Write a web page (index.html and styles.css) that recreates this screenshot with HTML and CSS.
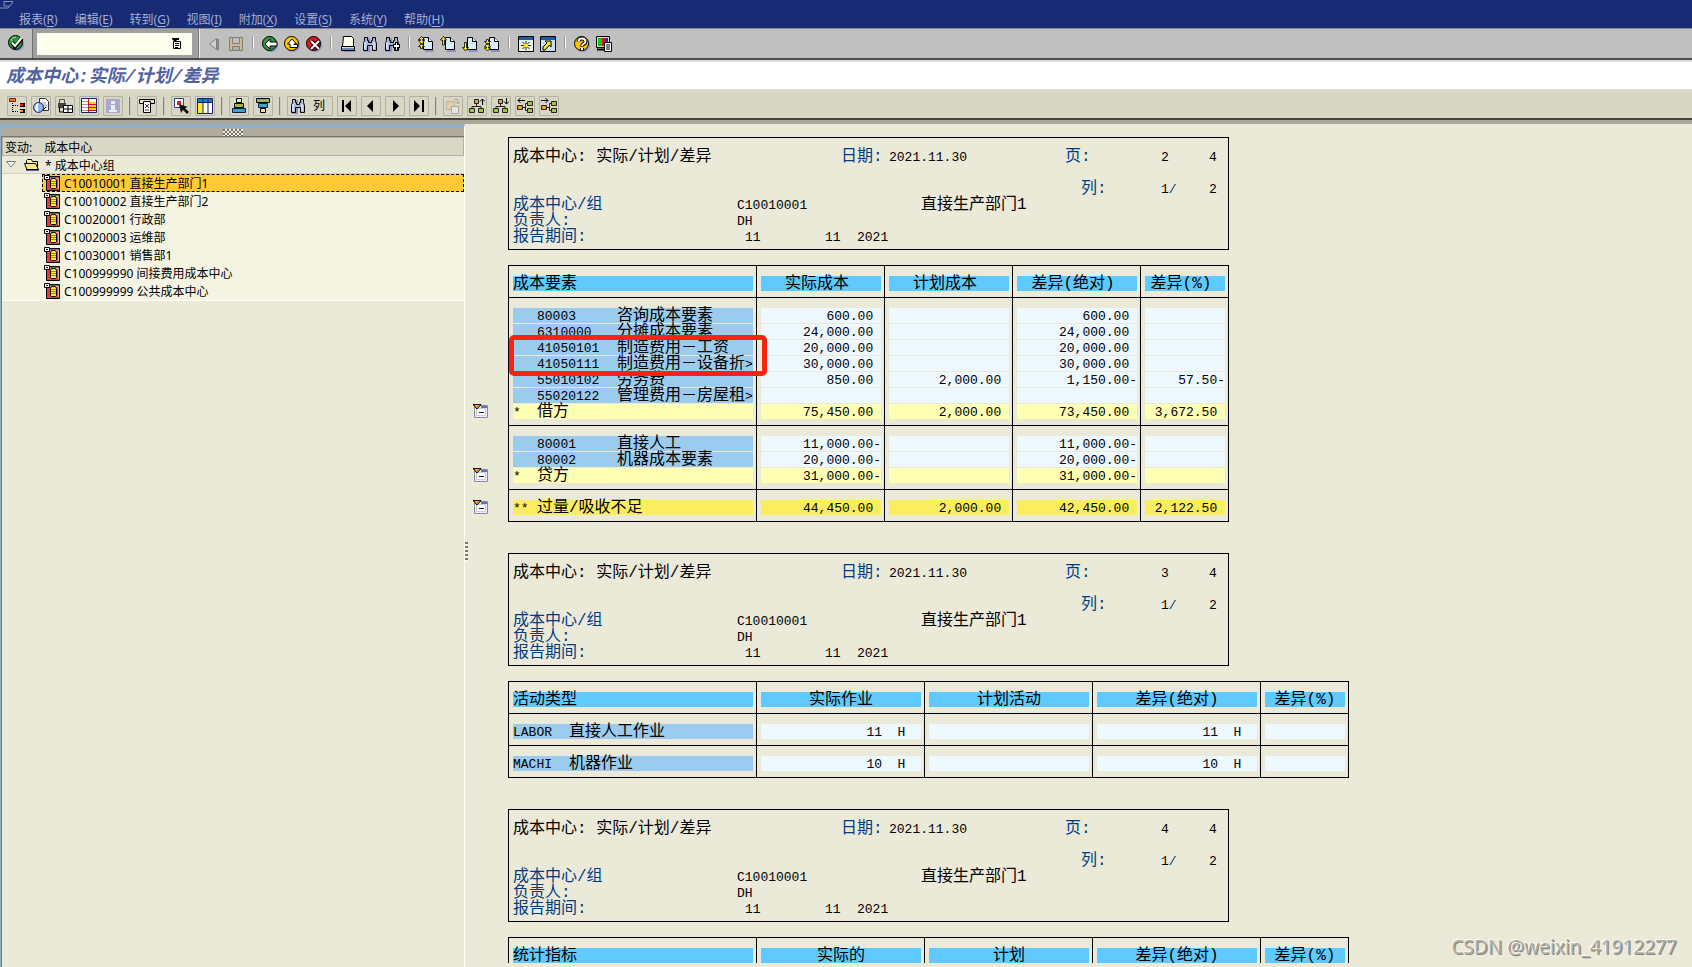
FILE: index.html
```html
<!DOCTYPE html>
<html lang="zh-CN">
<head>
<meta charset="utf-8">
<title>成本中心: 实际/计划/差异</title>
<link rel="stylesheet" href="styles.css">
</head>
<body>
<svg class="sprite" width="0" height="0" aria-hidden="true">
  <symbol id="check" viewBox="0 0 16 16"><circle cx="9" cy="9" r="7" fill="#8f8fc4"/><circle cx="7.5" cy="7.5" r="7" fill="#2c9a3a" stroke="#000"/><path d="M3 6a5 5 0 0 1 5-4" stroke="#9be29b" fill="none"/><path d="M4 7.500l3 4 7-8" stroke="#000" stroke-width="4" fill="none"/><path d="M4 7.500l3 3.500 6.500-8" stroke="#fff" stroke-width="2" fill="none"/></symbol>
  <symbol id="prev" viewBox="0 0 16 16"><path d="M11 2.500v12l2-.5v-11z" fill="#888"/><path d="M10.500 2.500v11l-7-5.500z" fill="#d0d0d0" stroke="#808080"/></symbol>
  <symbol id="save" viewBox="0 0 16 16"><path d="M1.500 1.500h13v13h-13z" fill="#c9b795" stroke="#85806f"/><path d="M4.500 1.500h7v6h-7z" fill="#c0c0c0" stroke="#85806f"/><path d="M4.500 10.500h7v4h-7z" fill="#aaa" stroke="#85806f"/></symbol>
  <symbol id="back" viewBox="0 0 16 16"><circle cx="9" cy="9" r="7" fill="#8f8fc4"/><circle cx="7.500" cy="7.500" r="7" fill="#2c9a3a" stroke="#000"/><path d="M3 8l5-5v3h7v4H8v3z" fill="#fff" stroke="#000"/></symbol>
  <symbol id="exit" viewBox="0 0 16 16"><circle cx="9" cy="9" r="7" fill="#8f8fc4"/><circle cx="7.500" cy="7.500" r="7" fill="#ffc800" stroke="#000"/><path d="M8 3L3.500 8H6v3.500h7.500v-3H10V8h2.500z" fill="#fff" stroke="#000"/></symbol>
  <symbol id="cancel" viewBox="0 0 16 16"><circle cx="9" cy="9" r="7" fill="#8f8fc4"/><circle cx="7.500" cy="7.500" r="7" fill="#e01420" stroke="#000"/><path d="M5 5l8 8M13 5l-8 8" stroke="#000" stroke-width="4"/><path d="M5 5l8 8M13 5l-8 8" stroke="#fff" stroke-width="2"/></symbol>
  <symbol id="print" viewBox="0 0 16 16"><path d="M3 14h13v2H3z" fill="#8f8fc4"/><path d="M3.500.5h8l2 2v8h-11z" fill="#fffff0" stroke="#000"/><path d="M1.500 10.500h13v4h-13z" fill="#c6dcef" stroke="#000"/><path d="M2 13h12" stroke="#17307a"/></symbol>
  <symbol id="find" viewBox="0 0 16 16"><path d="M3 2h5v14H2z" fill="#8f8fc4"/><path d="M2.500 1.500h3v3h1v2h3v-2h1v-3h3v3l1 3v7h-4v-5h-5v5h-4v-7l1-3z" fill="#a9b9dc" stroke="#000"/><path d="M3 6v7M12 6v7" stroke="#fff"/></symbol>
  <symbol id="findnext" viewBox="0 0 16 16"><use href="#find"/><path d="M9 8h2V6h3v2h2v4h-2v3h-3v-3H9z" fill="#000"/><path d="M12 7h1v2h2v2h-2v3h-1v-3h-2V9h2z" fill="#fff"/></symbol>
  <symbol id="page" viewBox="0 0 16 16"><path d="M7 14h9V5h1v11H7z" fill="#8f8fc4"/><path d="M5.500 1.500h5l4 4v8h-9z" fill="#d9ecf8" stroke="#000"/><path d="M10.500 1.500v4h4" fill="#fff" stroke="#000"/></symbol>
  <symbol id="firstpage" viewBox="0 0 16 16"><use href="#page"/><path d="M3.500.5l3 3h-2v1h2l-3 4-3-4h2v-1h-2zM3.500 7.500l3 3h-2v2h-2v-2h-2z" fill="#ffe818" stroke="#000" stroke-width=".8"/></symbol>
  <symbol id="pageup" viewBox="0 0 16 16"><use href="#page"/><path d="M3.500.5l3 3.500h-2v5h-2V4h-2z" fill="#ffe818" stroke="#000" stroke-width=".8"/></symbol>
  <symbol id="pagedown" viewBox="0 0 16 16"><use href="#page"/><path d="M3.500 15l3-3.500h-2v-5h-2v5h-2z" fill="#ffe818" stroke="#000" stroke-width=".8"/></symbol>
  <symbol id="lastpage" viewBox="0 0 16 16"><use href="#page"/><path d="M3.500 15l3-3h-2v-1h2l-3-4-3 4h2v1h-2zM2.500 3.500h2v2h2l-3 3-3-3h2z" fill="#ffe818" stroke="#000" stroke-width=".8"/></symbol>
  <symbol id="session" viewBox="0 0 16 16"><path d="M.5.500h15v15H.5z" fill="#e8f0e0" stroke="#000"/><path d="M1 1h14v3H1z" fill="#1460b0"/><path d="M8 5v9M3 9.500h10M4.500 6l7 7M11.500 6l-7 7" stroke="#222"/><path d="M6 8h4v3H6z" fill="#fff000"/></symbol>
  <symbol id="shortcut" viewBox="0 0 16 16"><path d="M.5.500h15v15H.5z" fill="#c6dcef" stroke="#000"/><path d="M1 1h14v3H1z" fill="#1460b0"/><path d="M3 14v-3l4-4-2-2h6v6L9.500 9 5 14z" fill="#ffe818" stroke="#000"/></symbol>
  <symbol id="help" viewBox="0 0 16 16"><circle cx="9" cy="9" r="7" fill="#8f8fc4"/><circle cx="7.500" cy="7.500" r="7" fill="#ffc400" stroke="#000"/><path d="M4.500 5.500c0-4 7-4 7 0 0 2.500-3.500 2-3.500 5M8 12v2" stroke="#000" stroke-width="4" fill="none"/><path d="M4.500 5.500c0-4 7-4 7 0 0 2.500-3.500 2-3.500 4.500M8 12v2" stroke="#fff" stroke-width="2" fill="none"/></symbol>
  <symbol id="layout" viewBox="0 0 16 16"><path d="M.5.500h13v11H.5z" fill="#ddd" stroke="#000"/><path d="M2 2h4v8H2z" fill="#0c0"/><path d="M6 2h3v8H6z" fill="#f00"/><path d="M9 2h3v8H9z" fill="#22f"/><path d="M1 13.500h8" stroke="#000" stroke-width="2"/><path d="M8.500 6.500h7v9h-7z" fill="#fff" stroke="#000"/><path d="M10 9h4M10 11h4M10 13h4" stroke="#000"/></symbol>
  <symbol id="tree" viewBox="0 0 16 16"><path d="M3.500 5v9M4 7.500h6M4 13.500h6" stroke="#000" stroke-dasharray="1 1" fill="none"/><path d="M.500.500h6v3h-6z" fill="#f07818" stroke="#7a2010"/><path d="M11 5h5v4h-5zM11 11h5v4h-5z" fill="#000"/><path d="M11 6h3v2h-3z" fill="#e62020"/><path d="M11 12h3v2h-3z" fill="#f59b20"/></symbol>
  <symbol id="docview" viewBox="0 0 16 16"><path d="M6.500.500h6l3 3v9h-9z" fill="#fff" stroke="#333"/><path d="M8 5h5M9 7h5M9 9h5" stroke="#999"/><circle cx="5.500" cy="9.500" r="5" fill="#8db6e8" stroke="#1a2a70"/><path d="M5 5v9a5 5 0 0 1 0-9" fill="#fff"/><path d="M10 12l3-3" stroke="#000"/></symbol>
  <symbol id="lockgrid" viewBox="0 0 16 16"><path d="M2.500 5V1.500h5V5" fill="none" stroke="#555"/><path d="M1 5h8v5H1z" fill="#444"/><path d="M6.500 7.500h9v7h-9z" fill="#fff" stroke="#000"/><path d="M7 11h8M11 8v6" stroke="#000"/><path d="M2.500 9v5h4" stroke="#000" fill="none"/></symbol>
  <symbol id="lines" viewBox="0 0 16 16"><path d="M.5.500h15v14H.5z" fill="#fff" stroke="#17206c"/><path d="M1 3.500h7M1 6.500h7M1 9.500h7M1 12.500h7" stroke="#99a"/><path d="M8 4h7v2H8zM8 7h7v2H8zM8 10h7v2H8z" fill="#ffd11f"/><path d="M8 6.500h7M8 9.500h7M8 12.500h7M7.500 1v13" stroke="#c11"/></symbol>
  <symbol id="info" viewBox="0 0 16 16"><path d="M1 1h14v14H1z" fill="#aaa9ca"/><path d="M6 3h4v3H6zM5 7h5v5h2v2H4v-2h2V8H5z" fill="#eceaf4"/></symbol>
  <symbol id="filter" viewBox="0 0 16 16"><path d="M.5 1.500h15v4H.5z" fill="#e8dfc4" stroke="#000"/><path d="M4.500 3.500h7v11h-7z" fill="#fff" stroke="#000"/><path d="M6 6l4 4M10 6l-4 4M6 12h4" stroke="#333"/></symbol>
  <symbol id="select" viewBox="0 0 16 16"><path d="M1.500.500h9v9h-9z" fill="#fff" stroke="#34407c"/><path d="M4 3h4v4H4z" fill="#e41e1e"/><path d="M6 6l9 3-3 1 4 4-2 2-4-4-2 3z" fill="#111"/></symbol>
  <symbol id="columns" viewBox="0 0 16 16"><path d="M.5.500h15v15H.5z" fill="#fff" stroke="#17206c"/><path d="M1 1h14v3H1z" fill="#1680c0"/><path d="M1 5h5v10H1z" fill="#ffe430"/><path d="M6 1v14M11 1v14M1 4.500h14" stroke="#17206c"/></symbol>
  <symbol id="sortup" viewBox="0 0 16 16"><path d="M5.500.500h5v4h-5z" fill="#eee890" stroke="#000"/><path d="M3.500 5.500h9v4h-9z" fill="#9fb843" stroke="#000"/><path d="M1.500 10.500h13v4h-13z" fill="#3fa0d0" stroke="#0b2040"/></symbol>
  <symbol id="sortdown" viewBox="0 0 16 16"><path d="M5.500 10.500h5v4h-5z" fill="#eee890" stroke="#000"/><path d="M3.500 5.500h9v4h-9z" fill="#3fa0d0" stroke="#0b2040"/><path d="M1.500.500h13v4h-13z" fill="#9fb843" stroke="#000"/></symbol>
  <symbol id="first" viewBox="0 0 16 16"><path d="M3 2h2v12H3zM12 2v12L6 8z"/></symbol>
  <symbol id="left" viewBox="0 0 16 16"><path d="M10 2v12L4 8z"/></symbol>
  <symbol id="right" viewBox="0 0 16 16"><path d="M6 2v12l6-6z"/></symbol>
  <symbol id="last" viewBox="0 0 16 16"><path d="M3 2v12l6-6zM11 2h2v12h-2z"/></symbol>
  <symbol id="copy" viewBox="0 0 16 16"><path d="M1.500 3.500h8v8h-8z" fill="#e6cda6" stroke="#bbb7a8"/><path d="M6.500 8.500h7v7h-7z" fill="#e3e6e4" stroke="#aba99d"/><path d="M9 1.500h4V6m-2-2l2 2 2-2" fill="none" stroke="#a9a79b"/></symbol>
  <symbol id="orgbase" viewBox="0 0 16 16"><path d="M7.500 6v3M3 11V8.500h9V11" fill="none" stroke="#222"/><path d="M5.500 1.500h4v4h-4z" fill="#f49a20" stroke="#222"/><path d="M.5 10.500h5v4h-5zM9.500 10.500h5v4h-5z" fill="#a5c540" stroke="#222"/></symbol>
  <symbol id="orgup" viewBox="0 0 16 16"><use href="#orgbase"/><path d="M13.500 7V1M11 3.500L13.500 1 16 3.500" fill="none" stroke="#000"/></symbol>
  <symbol id="orgdown" viewBox="0 0 16 16"><use href="#orgbase"/><path d="M13.500 0v6M11 3.500L13.500 6 16 3.500" fill="none" stroke="#000"/></symbol>
  <symbol id="orgside" viewBox="0 0 16 16"><path d="M6 9.500h2m2-4H8.500v7h2" fill="none" stroke="#222"/><path d="M.5 7.500h5v4h-5z" fill="#f49a20" stroke="#222"/><path d="M10.500 3.500h5v4h-5zM10.500 10.500h5v4h-5z" fill="#a5c540" stroke="#222"/></symbol>
  <symbol id="orgleft" viewBox="0 0 16 16"><use href="#orgside"/><path d="M8 2.500H1M3.500 0L1 2.500 3.500 5" fill="none" stroke="#000"/></symbol>
  <symbol id="orgright" viewBox="0 0 16 16"><use href="#orgside"/><path d="M0 2.500h7M4.500 0L7 2.500 4.500 5" fill="none" stroke="#000"/></symbol>
  <symbol id="folder" viewBox="0 0 16 16"><path d="M2 13h13v1H2z" fill="#4965a5"/><path d="M2.500 12.500v-9l1-1h4l1 2h5v8z" fill="#fff3a8" stroke="#000"/><path d="M3 12.500L.5 6.500h11l3 6z" fill="#ffe68a" stroke="#000"/></symbol>
  <symbol id="centre" viewBox="0 0 16 16"><path d="M2.500 1.500h13v14h-13z" fill="#e83a3a" stroke="#000"/><path d="M5 3.500h9.500V14" stroke="#ffb0a0" fill="none"/><path d="M6.500 5.500l1-2h4l1 2v7l-1 1h-4l-1-1z" fill="#ffee20" stroke="#000"/><path d="M7 6.500h5M7 8.500h5M7 10.500h5" stroke="#a08c00"/><path d="M.5.500h5v4h-5z" fill="#fff" stroke="#000"/><path d="M2 2.500h2" stroke="#000"/></symbol>
  <symbol id="collapse" viewBox="0 0 16 15"><path d="M1.500 1.500h13v12h-13z" fill="#e9eefb" stroke="#8b8c90"/><path d="M8 2h6v2H8z" fill="#4b7bb8"/><path d="M3.500 4.500h9v7h-9z" fill="#fff" stroke="#c3cbe8"/><path d="M6 8.500h5" stroke="#0a1590"/><path d="M0 .500h8L4 5z" fill="#f79a1c" stroke="#000"/></symbol>
</svg>

<header class="menubar">
  <svg class="window-mark" viewBox="0 0 14 9" width="14" height="9"><path d="M4 1.500h9M13 2l-3 4M4 1v5h5M0 8h8l2-2" fill="none" stroke="#8291b8"/></svg>
  <nav class="menu">
    <a href="#">报表(<u>R</u>)</a><a href="#">编辑(<u>E</u>)</a><a href="#">转到(<u>G</u>)</a><a href="#">视图(<u>I</u>)</a><a href="#">附加(<u>X</u>)</a><a href="#">设置(<u>S</u>)</a><a href="#">系统(<u>Y</u>)</a><a href="#">帮助(<u>H</u>)</a>
  </nav>
</header>

<div class="system-bar">
  <div class="confirm"><button class="plain" aria-label="确认"><svg><use href="#check"/></svg></button></div>
  <div class="command">
    <input type="text" aria-label="命令">
    <button class="plain history" aria-label="历史"><svg viewBox="0 0 10 11"><path d="M0 0h7v2H5L3 4 0 1z"/><path d="M1.500 3.500h7v7h-7z" fill="#fff" stroke="#000"/><path d="M3 5.500h4M3 7.500h4M3 9.500h3" stroke="#000"/></svg></button>
  </div>
  <div class="system-tools">
    <button class="plain" aria-label="上一个"><svg><use href="#prev"/></svg></button>
    <button class="plain" aria-label="保存"><svg><use href="#save"/></svg></button>
    <i class="rule"></i>
    <button class="plain" aria-label="返回"><svg><use href="#back"/></svg></button>
    <button class="plain" aria-label="退出"><svg><use href="#exit"/></svg></button>
    <button class="plain" aria-label="取消"><svg><use href="#cancel"/></svg></button>
    <i class="rule"></i>
    <button class="plain" aria-label="打印"><svg><use href="#print"/></svg></button>
    <button class="plain" aria-label="查找"><svg><use href="#find"/></svg></button>
    <button class="plain" aria-label="查找下一个"><svg><use href="#findnext"/></svg></button>
    <i class="rule"></i>
    <button class="plain" aria-label="第一页"><svg><use href="#firstpage"/></svg></button>
    <button class="plain" aria-label="上一页"><svg><use href="#pageup"/></svg></button>
    <button class="plain" aria-label="下一页"><svg><use href="#pagedown"/></svg></button>
    <button class="plain" aria-label="最后一页"><svg><use href="#lastpage"/></svg></button>
    <i class="rule"></i>
    <button class="plain" aria-label="新建会话"><svg><use href="#session"/></svg></button>
    <button class="plain" aria-label="快捷方式"><svg><use href="#shortcut"/></svg></button>
    <i class="rule"></i>
    <button class="plain" aria-label="帮助"><svg><use href="#help"/></svg></button>
    <button class="plain" aria-label="布局"><svg><use href="#layout"/></svg></button>
  </div>
</div>

<h1 class="title">成本中心:实际/计划/差异</h1>

<div class="app-bar">
  <button class="tool" aria-label="层次"><svg><use href="#tree"/></svg></button>
  <button class="tool" aria-label="凭证"><svg><use href="#docview"/></svg></button>
  <button class="tool" aria-label="锁定"><svg><use href="#lockgrid"/></svg></button>
  <button class="tool" aria-label="行项目"><svg><use href="#lines"/></svg></button>
  <button class="tool" aria-label="信息"><svg><use href="#info"/></svg></button>
  <i class="divider"></i>
  <button class="tool" aria-label="筛选"><svg><use href="#filter"/></svg></button>
  <i class="divider"></i>
  <button class="tool" aria-label="选择"><svg><use href="#select"/></svg></button>
  <button class="tool" aria-label="栏目"><svg><use href="#columns"/></svg></button>
  <i class="divider"></i>
  <button class="tool" aria-label="升序"><svg><use href="#sortup"/></svg></button>
  <button class="tool" aria-label="降序"><svg><use href="#sortdown"/></svg></button>
  <i class="divider"></i>
  <button class="tool wide"><svg><use href="#find"/></svg>列</button>
  <button class="tool" aria-label="首列"><svg><use href="#first"/></svg></button>
  <button class="tool" aria-label="左"><svg><use href="#left"/></svg></button>
  <button class="tool" aria-label="右"><svg><use href="#right"/></svg></button>
  <button class="tool" aria-label="末列"><svg><use href="#last"/></svg></button>
  <i class="divider"></i>
  <button class="tool" aria-label="复制"><svg><use href="#copy"/></svg></button>
  <button class="tool" aria-label="上级"><svg><use href="#orgup"/></svg></button>
  <button class="tool" aria-label="下级"><svg><use href="#orgdown"/></svg></button>
  <button class="tool" aria-label="左级"><svg><use href="#orgleft"/></svg></button>
  <button class="tool" aria-label="右级"><svg><use href="#orgright"/></svg></button>
</div>

<main class="workspace">
  <aside class="navigator">
    <div class="grip"><i class="dots"></i></div>
    <div class="variation"><span>变动:</span><span>成本中心</span></div>
    <div class="tree-root">
      <svg class="twisty" viewBox="0 0 10 7"><path d="M.5.500h9L5 6z" fill="#fff" stroke="#777"/></svg>
      <svg class="icon"><use href="#folder"/></svg>
      <span>* 成本中心组</span>
    </div>
    <ul class="tree">
      <li class="selected"><svg class="icon"><use href="#centre"/></svg><span>C10010001 直接生产部门1</span></li>
      <li><svg class="icon"><use href="#centre"/></svg><span>C10010002 直接生产部门2</span></li>
      <li><svg class="icon"><use href="#centre"/></svg><span>C10020001 行政部</span></li>
      <li><svg class="icon"><use href="#centre"/></svg><span>C10020003 运维部</span></li>
      <li><svg class="icon"><use href="#centre"/></svg><span>C10030001 销售部1</span></li>
      <li><svg class="icon"><use href="#centre"/></svg><span>C100999990 间接费用成本中心</span></li>
      <li><svg class="icon"><use href="#centre"/></svg><span>C100999999 公共成本中心</span></li>
    </ul>
  </aside>
  <div class="splitter"><i class="dots-vertical"></i></div>

  <div class="report">
    <section class="page">
      <div class="page-head">
        <div class="line"><span class="c1">成本中心: 实际/计划/差异</span><span class="c42 label">日期:</span><span class="c48 num">2021.11.30</span><span class="c70 label">页:</span><span class="c82 num">2</span><span class="c88 num">4</span></div>
        <div class="line"></div>
        <div class="line"><span class="c72 label">列:</span><span class="c82 num">1<span class="label">/</span></span><span class="c88 num">2</span></div>
        <div class="line"><span class="c1 label">成本中心/组</span><span class="c29 num">C10010001</span><span class="c52">直接生产部门1</span></div>
        <div class="line"><span class="c1 label">负责人:</span><span class="c29 num">DH</span></div>
        <div class="line"><span class="c1 label">报告期间:</span><span class="c30 num">11</span><span class="c40 num">11</span><span class="c44 num">2021</span></div>
      </div>
      <div class="sheet">
        <div class="gutter">
          <button class="plain" aria-label="折叠借方"><svg><use href="#collapse"/></svg></button>
          <button class="plain" aria-label="折叠贷方"><svg><use href="#collapse"/></svg></button>
          <button class="plain" aria-label="折叠合计"><svg><use href="#collapse"/></svg></button>
        </div>
        <table class="grid costs">
          <colgroup><col class="w-name"><col class="w-cost"><col class="w-cost"><col class="w-cost"><col class="w-pct"></colgroup>
          <thead><tr><th class="first">成本要素</th><th>实际成本</th><th>计划成本</th><th>差异(绝对)</th><th>差异(%)</th></tr></thead>
          <tbody>
            <tr><td><span class="code">80003</span>咨询成本要素</td><td>600.00&nbsp;</td><td></td><td>600.00&nbsp;</td><td></td></tr>
            <tr><td><span class="code">6310000</span>分摊成本要素</td><td>24,000.00&nbsp;</td><td></td><td>24,000.00&nbsp;</td><td></td></tr>
            <tr><td><span class="code">41050101</span>制造费用－工资</td><td>20,000.00&nbsp;</td><td></td><td>20,000.00&nbsp;</td><td></td></tr>
            <tr><td><span class="code">41050111</span>制造费用－设备折<span class="more">&gt;</span></td><td>30,000.00&nbsp;</td><td></td><td>30,000.00&nbsp;</td><td></td></tr>
            <tr><td><span class="code">55010102</span>劳务费</td><td>850.00&nbsp;</td><td>2,000.00&nbsp;</td><td>1,150.00-</td><td>57.50-</td></tr>
            <tr><td><span class="code">55020122</span>管理费用－房屋租<span class="more">&gt;</span></td><td></td><td></td><td></td><td></td></tr>
            <tr class="subtotal"><td><span class="mark">*</span>借方</td><td>75,450.00&nbsp;</td><td>2,000.00&nbsp;</td><td>73,450.00&nbsp;</td><td>3,672.50&nbsp;</td></tr>
          </tbody>
          <tbody>
            <tr><td><span class="code">80001</span>直接人工</td><td>11,000.00-</td><td></td><td>11,000.00-</td><td></td></tr>
            <tr><td><span class="code">80002</span>机器成本要素</td><td>20,000.00-</td><td></td><td>20,000.00-</td><td></td></tr>
            <tr class="subtotal"><td><span class="mark">*</span>贷方</td><td>31,000.00-</td><td></td><td>31,000.00-</td><td></td></tr>
          </tbody>
          <tbody>
            <tr class="total"><td><span class="mark">**</span>过量/吸收不足</td><td>44,450.00&nbsp;</td><td>2,000.00&nbsp;</td><td>42,450.00&nbsp;</td><td>2,122.50&nbsp;</td></tr>
          </tbody>
        </table>
        <div class="highlight"></div>
      </div>
    </section>

    <section class="page">
      <div class="page-head">
        <div class="line"><span class="c1">成本中心: 实际/计划/差异</span><span class="c42 label">日期:</span><span class="c48 num">2021.11.30</span><span class="c70 label">页:</span><span class="c82 num">3</span><span class="c88 num">4</span></div>
        <div class="line"></div>
        <div class="line"><span class="c72 label">列:</span><span class="c82 num">1<span class="label">/</span></span><span class="c88 num">2</span></div>
        <div class="line"><span class="c1 label">成本中心/组</span><span class="c29 num">C10010001</span><span class="c52">直接生产部门1</span></div>
        <div class="line"><span class="c1 label">负责人:</span><span class="c29 num">DH</span></div>
        <div class="line"><span class="c1 label">报告期间:</span><span class="c30 num">11</span><span class="c40 num">11</span><span class="c44 num">2021</span></div>
      </div>
      <div class="sheet">
        <div class="gutter"></div>
        <table class="grid">
          <colgroup><col class="w-name"><col class="w-qty"><col class="w-qty"><col class="w-qty"><col class="w-pct"></colgroup>
          <thead><tr><th class="first">活动类型</th><th>实际作业</th><th>计划活动</th><th>差异(绝对)</th><th>差异(%)</th></tr></thead>
          <tbody><tr><td><span class="key">LABOR</span>直接人工作业</td><td>11&nbsp;&nbsp;H&nbsp;&nbsp;</td><td></td><td>11&nbsp;&nbsp;H&nbsp;&nbsp;</td><td></td></tr></tbody>
          <tbody><tr><td><span class="key">MACHI</span>机器作业</td><td>10&nbsp;&nbsp;H&nbsp;&nbsp;</td><td></td><td>10&nbsp;&nbsp;H&nbsp;&nbsp;</td><td></td></tr></tbody>
        </table>
      </div>
    </section>

    <section class="page">
      <div class="page-head">
        <div class="line"><span class="c1">成本中心: 实际/计划/差异</span><span class="c42 label">日期:</span><span class="c48 num">2021.11.30</span><span class="c70 label">页:</span><span class="c82 num">4</span><span class="c88 num">4</span></div>
        <div class="line"></div>
        <div class="line"><span class="c72 label">列:</span><span class="c82 num">1<span class="label">/</span></span><span class="c88 num">2</span></div>
        <div class="line"><span class="c1 label">成本中心/组</span><span class="c29 num">C10010001</span><span class="c52">直接生产部门1</span></div>
        <div class="line"><span class="c1 label">负责人:</span><span class="c29 num">DH</span></div>
        <div class="line"><span class="c1 label">报告期间:</span><span class="c30 num">11</span><span class="c40 num">11</span><span class="c44 num">2021</span></div>
      </div>
      <div class="sheet">
        <div class="gutter"></div>
        <table class="grid">
          <colgroup><col class="w-name"><col class="w-qty"><col class="w-qty"><col class="w-qty"><col class="w-pct"></colgroup>
          <thead><tr><th class="first">统计指标</th><th>实际的</th><th>计划</th><th>差异(绝对)</th><th>差异(%)</th></tr></thead>
        </table>
      </div>
    </section>
  </div>
  <div class="watermark">CSDN @weixin_41912277</div>
</main>
</body>
</html>
```
FILE: styles.css
```css
* { box-sizing: border-box; }

body {
  margin: 0;
  height: 100vh;
  display: flex;
  flex-direction: column;
  overflow: hidden;
  background: #ebe9d8;
  color: #000;
  font: 12px/18px "Noto Sans", "Noto Sans CJK SC", sans-serif;
}

.sprite { position: absolute; }
svg { display: block; }
a { color: inherit; text-decoration: none; }

button {
  margin: 0;
  padding: 0;
  border: 0;
  background: none;
  font: inherit;
  color: inherit;
}

.plain svg, .tool svg, .icon { width: 16px; height: 16px; flex: none; }

/* Menu */
.menubar {
  flex: none;
  height: 28px;
  background: #172a74;
  color: #a3aed2;
}
.window-mark { height: 9px; }
.menu {
  display: flex;
  gap: 17px;
  padding: 2px 19px 0;
  line-height: 18px;
}
.menu u { text-underline-offset: 2px; }

/* System toolbar */
.system-bar {
  flex: none;
  display: flex;
  height: 32px;
  background: #c0c0c0;
  border-top: 1px solid #8a8a8a;
  border-bottom: 2px solid #4c4c4c;
}
.confirm { width: 33px; padding: 6px 8px; border-right: 1px solid #707070; }
.command {
  display: flex;
  align-items: center;
  width: 166px;
  padding: 0 6px 0 4px;
  background: #a0a0a0;
  border-right: 1px solid #808080;
}
.command input {
  width: 100%;
  height: 22px;
  border: 0;
  background: #fffff0;
}
.history { width: 10px; margin-left: -20px; margin-right: 10px; }
.history svg { width: 10px; height: 11px; }
.system-tools {
  display: flex;
  flex: 1;
  gap: 6px;
  padding: 5px 6px;
  border-left: 1px solid #e8e8e8;
}
.rule {
  width: 2px;
  height: 13px;
  margin: 2px 2px;
  border-left: 1px solid #989898;
  border-right: 1px solid #f4f4f4;
}

.title {
  flex: none;
  height: 29px;
  margin: 0;
  padding: 2px 6px 0;
  background: #fff;
  border-top: 2px solid #dcdcdc;
  color: #5262a0;
  font: italic bold 18px/27px "Liberation Mono", "Noto Sans CJK SC", monospace;
}

/* Application toolbar */
.app-bar {
  flex: none;
  display: flex;
  align-items: center;
  gap: 4px;
  height: 35px;
  padding: 1px 7px 0;
  background: #d8d6c4;
  border-top: 2px solid #dedcd0;
  border-bottom: 4px solid #aaa798;
  box-shadow: inset 0 -2px #45433c;
}
.tool {
  display: flex;
  align-items: center;
  justify-content: center;
  width: 20px;
  height: 20px;
  border: 1px solid #b3b1a2;
  border-radius: 1px;
}
.tool.wide { width: 46px; justify-content: flex-start; gap: 7px; padding-left: 2px; }
.divider { width: 2px; height: 18px; margin: 0 2px; border-left: 1px solid #85837a; border-right: 1px solid #c9c7b8; }

.workspace { position: relative; flex: 1; display: flex; min-height: 0; }

/* Navigation tree */
.navigator {
  width: 465px;
  flex: none;
  border-left: 1px solid #8fb0c5;
  border-right: 1px solid #fffff4;
  border-top: 4px solid #94b1c3;
  box-shadow: inset 1px 0 #77756c;
}
.grip {
  display: flex;
  justify-content: center;
  height: 9px;
  padding-top: 1px;
  background: #afac9f;
  border-bottom: 1px solid #77756c;
}
.dots { width: 20px; height: 7px; background: repeating-conic-gradient(#f3f1e4 0 25%, #706e66 0 50%) 0 0 / 4px 4px; }
.variation {
  display: flex;
  gap: 12px;
  height: 19px;
  margin-left: 1px;
  padding: 1px 0 0 2px;
  border: 1px solid #b5b3a4;
  background: #d9d7c5;
}
.tree-root {
  display: flex;
  align-items: center;
  height: 18px;
  margin-left: 1px;
  padding-left: 4px;
  border-bottom: 1px solid #d3d1c3;
}
.twisty { width: 10px; height: 7px; margin-right: 8px; }
.tree-root span { padding: 2px 0 0 5px; }
.tree {
  margin: 0 0 0 1px;
  padding: 0 0 0 40px;
  list-style: none;
  background: #f5f3e2;
  border-bottom: 1px solid #fffff4;
}
.tree li {
  display: flex;
  align-items: center;
  gap: 4px;
  height: 18px;
  padding-left: 1px;
  border: 1px solid transparent;
}
.tree li span { padding-top: 2px; }
.tree .selected { background: #ffcb35; border: 1px dashed #000; }

.splitter { display: flex; align-items: center; width: 8px; flex: none; padding-top: 13px; }
.dots-vertical { width: 3px; height: 20px; background: repeating-linear-gradient(#77756c 0 2px, #f8f6e8 2px 4px); }

/* Report list */
.report {
  flex: 1;
  min-width: 0;
  margin-bottom: 4px;
  padding-top: 13px;
  overflow: hidden;
  white-space: nowrap;
  font: 16px/15px "Liberation Mono", "Noto Sans CJK SC", monospace;
}
.page { margin-bottom: 31px; }
.page-head {
  width: max-content;
  margin: 0 0 15px 35px;
  padding: 11px 3px 4px 4px;
  border: 1px solid #000;
}
.line { display: grid; grid-template-columns: repeat(89, 8px); height: 16px; align-items: center; }
.c1 { grid-column: 1; }
.c29 { grid-column: 29; }
.c30 { grid-column: 30; }
.c40 { grid-column: 40; }
.c42 { grid-column: 42; }
.c44 { grid-column: 44; }
.c48 { grid-column: 48; }
.c52 { grid-column: 52; }
.c70 { grid-column: 70; }
.c72 { grid-column: 72; }
.c82 { grid-column: 82; }
.c88 { grid-column: 88; }
.label { color: #003b84; }
.num { font-size: 13px; }

.sheet { position: relative; display: flex; align-items: flex-start; }
.gutter { width: 35px; flex: none; }
.gutter .plain { display: block; margin-bottom: 17px; }
.gutter .plain:first-child { margin: 139px 0 49px; }
.gutter .plain:last-child { margin-bottom: 0; }
.gutter svg { height: 15px; }

.grid { border-spacing: 0; border: solid #000; border-width: 0 1px 1px 0; }
.w-name { width: 248px; }
.w-cost { width: 128px; }
.w-qty { width: 168px; }
.w-pct { width: 88px; }
.grid th, .grid td {
  --band: #edf8ff;
  height: 16px;
  padding: 1px 3px 0 4px;
  border-left: 1px solid #000;
  background: linear-gradient(var(--band), var(--band)) 4px 0 / calc(100% - 7px) 15px no-repeat;
  text-align: right;
  font-size: 13px;
  font-weight: normal;
}
.grid th { --band: #5fcaff; font-size: 16px; text-align: center; }
.grid .first { text-align: left; }
.costs th:not(.first) { text-indent: -8px; }
.grid td:first-child { --band: #9bcced; font-size: 16px; text-align: left; }
.grid tr:first-child > * { border-top: 1px solid #000; padding-top: 11px; background-position: 4px 10px; }
.grid tr:last-child > * { padding-bottom: 5px; }
.grid .subtotal td { --band: #ffffb6; }
.grid .total td { --band: #faed60; }
.code, .mark, .key { display: inline-block; font-size: 13px; line-height: 12px; }
.code { width: 104px; padding-left: 24px; }
.mark { width: 24px; }
.key { width: 56px; }
.more { font-size: 13px; line-height: 12px; }

.highlight {
  position: absolute;
  left: 36px;
  top: 70px;
  width: 258px;
  height: 41px;
  border: 5px solid #fc2210;
  border-radius: 5px;
}

.watermark {
  position: absolute;
  right: 15px;
  bottom: 6px;
  color: #aeada5;
  font: 19px/28px "Noto Sans", sans-serif;
  text-shadow: -1px -1px #fbfaf2, 1px 1px #85847e;
}
```
